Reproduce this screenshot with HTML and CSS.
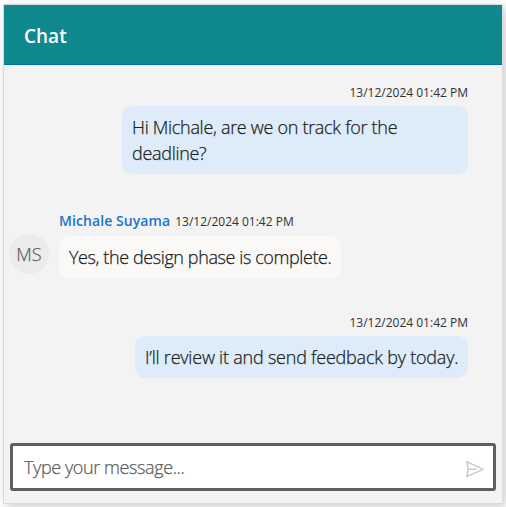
FILE: index.html
```html
<!DOCTYPE html>
<html lang="en">
<head>
<meta charset="utf-8">
<title>Chat</title>
<link rel="stylesheet" href="styles.css">
</head>
<body>
<main class="chat">
  <header class="chat-header"><h1 class="title">Chat</h1></header>
  <section class="messages">
    <article class="message own">
      <div class="meta"><time class="time">13/12/2024 01:42 PM</time></div>
      <p class="bubble wide">Hi Michale, are we on track for the<br>deadline?</p>
    </article>
    <article class="message other">
      <div class="avatar"><span>MS</span></div>
      <div class="content">
        <div class="meta"><span class="author">Michale Suyama</span><time class="time">13/12/2024 01:42 PM</time></div>
        <p class="bubble reply">Yes, the design phase is complete.</p>
      </div>
    </article>
    <article class="message own">
      <div class="meta"><time class="time">13/12/2024 01:42 PM</time></div>
      <p class="bubble short">I’ll review it and send feedback by today.</p>
    </article>
  </section>
  <footer class="composer">
    <span class="placeholder">Type your message...</span>
    <svg class="send" viewBox="0 0 20 18" fill="none" stroke="#c8c8c8" stroke-width="1.4" stroke-linejoin="round"><path d="M1.6 1.7 18.2 9.3 1.6 16.6 3.3 9.3ZM3.3 9.3H11.5"/></svg>
  </footer>
</main>
</body>
</html>
```
FILE: styles.css
```css
* { box-sizing: border-box; }
body {
  margin: 0;
  padding: 4px 3px;
  height: 507px;
  overflow: hidden;
  background: #fff;
  font-family: "Open Sans", "Noto Sans", sans-serif;
  color: #201f1e;
}
.chat {
  display: flex;
  flex-direction: column;
  width: 500px;
  height: 500px;
  border: 1px solid #dadada;
  background: #f3f3f3;
  box-shadow: 3px 3px 10px rgba(0, 0, 0, .2);
}
.chat-header {
  display: flex;
  align-items: center;
  height: 60px;
  padding: 2px 20px 0;
  background: #0f888e;
  border-bottom: 1px solid #0070b8;
}
.title {
  margin: 0;
  color: #fff;
  font-size: 19px;
  font-weight: 600;
  line-height: 24px;
}
.messages {
  display: flex;
  flex: 1;
  flex-direction: column;
  padding: 18px 34px 0 5px;
}
.message { display: flex; }
.own {
  flex-direction: column;
  align-items: flex-end;
}
.meta {
  display: flex;
  align-items: center;
  height: 20px;
  margin-bottom: 3px;
  white-space: nowrap;
}
.time {
  font-size: 12px;
  line-height: 16px;
  color: #323130;
}
.bubble {
  margin: 0;
  padding: 8px 10px;
  border-radius: 10px;
  background: #deecf9;
  font-size: 18px;
  font-weight: 300;
  line-height: 26px;
  white-space: nowrap;
  -webkit-text-stroke: .25px currentColor;
}
.wide { width: 346px; letter-spacing: -.3px; }
.short { width: 333px; letter-spacing: -.22px; }
.reply { width: 282px; background: #faf9f8; letter-spacing: -.4px; }
.other {
  align-items: flex-end;
  gap: 10px;
  margin: 36px 0 35px;
}
.other .meta { margin-bottom: 6px; }
.other .time { margin-top: 4px; }
.author {
  margin-right: 5px;
  color: #1873ce;
  font-size: 14px;
  font-weight: 600;
  letter-spacing: .08px;
}
.avatar {
  display: grid;
  place-items: center;
  width: 40px;
  height: 40px;
  margin-bottom: 4px;
  border-radius: 50%;
  background: #edebe9;
  color: #605e5c;
  font-size: 18px;
  font-weight: 300;
  -webkit-text-stroke: .25px currentColor;
}
.composer {
  display: flex;
  align-items: center;
  justify-content: space-between;
  height: 48px;
  margin: 0 6px 12px;
  padding: 0 8px 0 11px;
  border: 3px solid #605e5e;
  border-radius: 3px;
  background: #fff;
}
.placeholder {
  color: #605e5c;
  font-size: 18px;
  font-weight: 300;
  letter-spacing: -.4px;
  -webkit-text-stroke: .25px currentColor;
}
.send {
  width: 20px;
  height: 18px;
  margin-top: 4px;
}
```
